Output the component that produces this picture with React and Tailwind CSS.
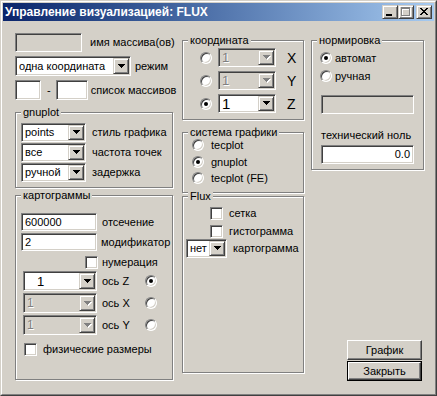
import React from "react";

const sunken =
  "border border-[#808080] border-b-white border-r-white shadow-[inset_1px_1px_0_#404040,inset_-1px_-1px_0_#d4d0c8]";
const raised =
  "border border-[#d4d0c8] border-b-[#404040] border-r-[#404040] shadow-[inset_1px_1px_0_#fff,inset_-1px_-1px_0_#808080] bg-[#d4d0c8]";
const disText = "text-[#808080] [text-shadow:1px_1px_0_#fff]";

const TRI = "M0 0h7v1h-1v1h-1v1h-1v1h-1v-1h-1v-1h-1v-1h-1z";

function Arrow({ disabled }) {
  return (
    <svg width="8" height="5" viewBox="0 0 8 5" className="block">
      {disabled && <path d={TRI} transform="translate(1 1)" fill="#fff" />}
      <path d={TRI} fill={disabled ? "#808080" : "#000"} />
    </svg>
  );
}

function Combo({ className = "", value, disabled, textClass = "" }) {
  return (
    <div
      className={`${sunken} ${disabled ? "bg-[#d4d0c8]" : "bg-white"} flex p-px shrink-0 ${className}`}
    >
      <div
        className={`flex-1 flex items-center pl-[2px] overflow-hidden whitespace-nowrap ${
          disabled ? disText : ""
        } ${textClass}`}
      >
        {value}
      </div>
      <div className={`${raised} w-[16px] flex items-center justify-center shrink-0 pl-px`}>
        <Arrow disabled={disabled} />
      </div>
    </div>
  );
}

function Edit({ className = "", value = "", disabled, right }) {
  return (
    <div
      className={`${sunken} ${disabled ? "bg-[#d4d0c8]" : "bg-white"} flex items-center px-[3px] shrink-0 ${
        right ? "justify-end" : ""
      } ${className}`}
    >
      {value}
    </div>
  );
}

function Radio({ checked, className = "" }) {
  return (
    <span
      className={`w-[12px] h-[12px] rounded-full border border-[#808080] border-b-white border-r-white bg-white shadow-[inset_1px_1px_0_#404040,inset_-1px_-1px_0_#d4d0c8] flex items-center justify-center shrink-0 ${className}`}
    >
      {checked && <span className="w-[4px] h-[4px] rounded-full bg-black" />}
    </span>
  );
}

function Check({ className = "" }) {
  return <span className={`w-[13px] h-[13px] bg-white shrink-0 ${sunken} ${className}`} />;
}

function Group({ title, className = "", inner = "", children }) {
  return (
    <fieldset
      className={`border border-[#808080] shadow-[1px_1px_0_#fff,inset_1px_1px_0_#fff] min-w-0 shrink-0 ${className}`}
    >
      <legend className="ml-[5px] px-[2px] leading-[13px] bg-[#d4d0c8]">{title}</legend>
      <div className={`flex flex-col ${inner}`}>{children}</div>
    </fieldset>
  );
}

function CapBtn({ children, className = "" }) {
  return (
    <div className={`${raised} w-[16px] h-[14px] shrink-0 ${className}`}>
      <svg width="14" height="12" viewBox="0 0 14 12" className="block">
        {children}
      </svg>
    </div>
  );
}

function Button({ children }) {
  return (
    <div className="w-[75px] h-[20px] border border-white border-b-[#404040] border-r-[#404040] shadow-[inset_-1px_-1px_0_#808080] flex items-center justify-center">
      {children}
    </div>
  );
}

function DefButton({ children }) {
  return (
    <div className="w-[75px] h-[20px] border border-black flex">
      <div className="flex-1 border border-white border-b-[#404040] border-r-[#404040] shadow-[inset_-1px_-1px_0_#808080] flex items-center justify-center">
        {children}
      </div>
    </div>
  );
}

const X_ROWS = [
  [0, 6],
  [1, 5],
  [2, 4],
  [3, 3],
  [2, 4],
  [1, 5],
  [0, 6],
];

export default function App() {
  return (
    <div className="w-[437px] h-[396px] bg-[#d4d0c8] border border-[#d4d0c8] border-b-[#404040] border-r-[#404040] font-['Liberation_Sans',Arial,sans-serif] text-[11px] leading-[13px] text-black select-none">
      <div className="h-full border border-white border-b-[#808080] border-r-[#808080] p-px flex flex-col">
        {/* title bar */}
        <div className="h-[18px] shrink-0 flex items-center bg-linear-to-r from-[#0a246a] to-[#a6caf0] pl-[2px] pr-[2px]">
          <span className="flex-1 text-white font-bold text-[12px] leading-[14px] whitespace-nowrap">
            Управление визуализацией: FLUX
          </span>
          <CapBtn>
            <rect x="3" y="8" width="6" height="2" fill="#000" />
          </CapBtn>
          <CapBtn>
            <g fill="#fff" transform="translate(1 1)">
              <rect x="2" y="1" width="9" height="2" />
              <rect x="2" y="1" width="1" height="9" />
              <rect x="10" y="1" width="1" height="9" />
              <rect x="2" y="9" width="9" height="1" />
            </g>
            <g fill="#808080">
              <rect x="2" y="1" width="9" height="2" />
              <rect x="2" y="1" width="1" height="9" />
              <rect x="10" y="1" width="1" height="9" />
              <rect x="2" y="9" width="9" height="1" />
            </g>
          </CapBtn>
          <CapBtn className="ml-[2px]">
            <g fill="#000">
              {X_ROWS.map(([a, b], i) => (
                <React.Fragment key={i}>
                  <rect x={3 + a} y={2 + i} width="2" height="1" />
                  <rect x={3 + b} y={2 + i} width="2" height="1" />
                </React.Fragment>
              ))}
            </g>
          </CapBtn>
        </div>

        {/* body */}
        <div className="flex flex-1 min-h-0 pl-[12px] pb-[12px]">
          {/* left column */}
          <div className="w-[158px] flex flex-col shrink-0">
            <div className="mt-[12px] h-[19px] flex items-center">
              <Edit disabled className="w-[67px] h-[19px]" />
              <span className="ml-[8px] whitespace-nowrap">имя массива(ов)</span>
            </div>
            <div className="mt-[4px] h-[20px] flex items-center">
              <Combo className="w-[116px] h-[20px]" value="одна координата" />
              <span className="ml-[4px] whitespace-nowrap">режим</span>
            </div>
            <div className="mt-[4px] h-[20px] flex items-center">
              <Edit className="w-[26px] h-[20px]" />
              <span className="ml-[6px]">-</span>
              <Edit className="ml-[5px] w-[32px] h-[20px]" />
              <span className="ml-[3px] whitespace-nowrap">список массивов</span>
            </div>

            <Group title="gnuplot" className="mt-[6px] h-[82px]" inner="pl-[5px] pt-[4px] gap-px">
              {[
                ["points", "стиль графика"],
                ["все", "частота точек"],
                ["ручной", "задержка"],
              ].map(([v, l]) => (
                <div key={l} className="flex items-center h-[19px]">
                  <Combo className="w-[65px] h-[19px]" value={v} />
                  <span className="ml-[6px] whitespace-nowrap">{l}</span>
                </div>
              ))}
            </Group>

            <Group title="картограммы" className="mt-px h-[191px]" inner="pl-[5px]">
              <div className="mt-[11px] flex items-center h-[18px]">
                <Edit className="w-[76px] h-[18px]" value="600000" />
                <span className="ml-[5px] whitespace-nowrap">отсечение</span>
              </div>
              <div className="mt-[2px] flex items-center h-[18px]">
                <Edit className="w-[76px] h-[18px]" value="2" />
                <span className="ml-[4px] whitespace-nowrap">модификатор</span>
              </div>
              <div className="mt-[5px] flex items-center h-[13px]">
                <Check className="ml-[64px]" />
                <span className="ml-[4px] whitespace-nowrap">нумерация</span>
              </div>
              {[
                ["ось Z", false, true],
                ["ось X", true, false],
                ["ось Y", true, false],
              ].map(([l, dis, chk]) => (
                <div key={l} className="mt-[2px] flex items-center h-[20px]">
                  <Combo
                    className="ml-[2px] w-[74px] h-[20px]"
                    value="1"
                    disabled={dis}
                    textClass={dis ? "text-[12px]" : "pl-[12px] text-[13px]"}
                  />
                  <span className="ml-[5px] w-[40px] whitespace-nowrap">{l}</span>
                  <Radio checked={chk} className="ml-[3px]" />
                </div>
              ))}
              <div className="mt-[8px] flex items-center h-[13px]">
                <Check className="ml-[3px]" />
                <span className="ml-[6px] whitespace-nowrap">физические размеры</span>
              </div>
            </Group>
          </div>

          {/* middle column */}
          <div className="ml-[9px] w-[122px] flex flex-col shrink-0">
            <Group title="координата" className="mt-[13px] h-[86px]" inner="pl-[17px]">
              {["X", "Y", "Z"].map((l, i) => (
                <div key={l} className={`flex items-center h-[19px] ${i === 0 ? "mt-px" : "mt-[4px]"}`}>
                  <Radio checked={i === 2} />
                  <Combo
                    className="ml-[6px] w-[58px] h-[19px]"
                    disabled={i < 2}
                    value="1"
                    textClass={i < 2 ? "text-[13px]" : "text-[15px]"}
                  />
                  <span className="ml-[11px] text-[14px] leading-[16px]">{l}</span>
                </div>
              ))}
            </Group>

            <Group title="система графики" className="mt-[6px] h-[67px]" inner="pl-[9px]">
              <div className="flex items-center h-[12px]">
                <Radio />
                <span className="ml-[7px] whitespace-nowrap">tecplot</span>
              </div>
              <div className="mt-[5px] flex items-center h-[12px]">
                <Radio checked />
                <span className="ml-[7px] whitespace-nowrap">gnuplot</span>
              </div>
              <div className="mt-[4px] flex items-center h-[12px]">
                <Radio />
                <span className="ml-[7px] whitespace-nowrap">tecplot (FE)</span>
              </div>
            </Group>

            <Group title="Flux" className="mt-[-3px] h-[183px]">
              <div className="mt-[4px] flex items-center h-[13px]">
                <Check className="ml-[27px]" />
                <span className="ml-[6px] whitespace-nowrap">сетка</span>
              </div>
              <div className="mt-[5px] flex items-center h-[13px]">
                <Check className="ml-[27px]" />
                <span className="ml-[6px] whitespace-nowrap">гистограмма</span>
              </div>
              <div className="mt-px flex items-center h-[19px]">
                <Combo className="ml-[3px] w-[41px] h-[19px]" value="нет" />
                <span className="ml-[6px] whitespace-nowrap">картограмма</span>
              </div>
            </Group>
          </div>

          {/* right column */}
          <div className="ml-[7px] w-[113px] flex flex-col shrink-0">
            <Group title="нормировка" className="mt-[13px] h-[136px]" inner="pl-[8px]">
              <div className="mt-[5px] flex items-center h-[12px]">
                <Radio checked />
                <span className="ml-[3px] whitespace-nowrap">автомат</span>
              </div>
              <div className="mt-[6px] flex items-center h-[12px]">
                <Radio />
                <span className="ml-[3px] whitespace-nowrap">ручная</span>
              </div>
              <Edit disabled className="mt-[13px] ml-px w-[93px] h-[19px]" />
              <div className="mt-[15px] ml-px whitespace-nowrap">технический ноль</div>
              <Edit className="mt-[3px] ml-px w-[93px] h-[19px]" value="0.0" right />
            </Group>
            <div className="mt-auto flex flex-col items-end pr-[2px] gap-px">
              <Button>График</Button>
              <DefButton>Закрыть</DefButton>
            </div>
          </div>
        </div>
      </div>
    </div>
  );
}
